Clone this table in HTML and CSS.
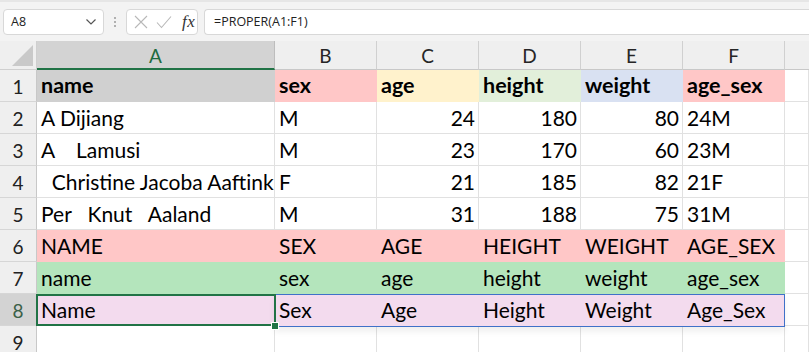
FILE: index.html
```html
<!DOCTYPE html>
<html>
<head>
<meta charset="utf-8">
<link rel="stylesheet" href="styles.css">
</head>
<body>
<div class="toolbar">
  <div class="namebox">
    <span class="ref">A8</span>
    <svg class="chev" width="12" height="8" viewBox="0 0 12 8"><path d="M1.5 1.5 L6 6 L10.5 1.5" fill="none" stroke="#555" stroke-width="1.2"/></svg>
  </div>
  <div class="dots"><i></i><i></i><i></i></div>
  <div class="fxbox">
    <svg width="14" height="14" viewBox="0 0 14 14"><path d="M1 1 L13 13 M13 1 L1 13" stroke="#b8b8b8" stroke-width="1.1" fill="none"/></svg>
    <svg width="16" height="14" viewBox="0 0 16 14"><path d="M1 7.5 L5.5 12.5 L15 1.5" stroke="#b8b8b8" stroke-width="1.1" fill="none"/></svg>
    <span class="fx">fx</span>
  </div>
  <div class="formula">=PROPER(A1:F1)</div>
</div>

<div class="sheet">
  <div class="corner"><span class="tri"></span></div>
  <div class="ch sel">A</div>
  <div class="ch">B</div>
  <div class="ch">C</div>
  <div class="ch">D</div>
  <div class="ch">E</div>
  <div class="ch">F</div>
  <div class="ch last"></div>

  <div class="rh">1</div>
  <div class="c b gray">name</div>
  <div class="c b pink">sex</div>
  <div class="c b yellow">age</div>
  <div class="c b lgreen">height</div>
  <div class="c b blue">weight</div>
  <div class="c b pink">age_sex</div>
  <div class="c"></div>

  <div class="rh">2</div>
  <div class="c">A Dijiang</div>
  <div class="c">M</div>
  <div class="c n">24</div>
  <div class="c n">180</div>
  <div class="c n">80</div>
  <div class="c">24M</div>
  <div class="c"></div>

  <div class="rh">3</div>
  <div class="c">A    Lamusi</div>
  <div class="c">M</div>
  <div class="c n">23</div>
  <div class="c n">170</div>
  <div class="c n">60</div>
  <div class="c">23M</div>
  <div class="c"></div>

  <div class="rh">4</div>
  <div class="c">  Christine Jacoba Aaftink</div>
  <div class="c">F</div>
  <div class="c n">21</div>
  <div class="c n">185</div>
  <div class="c n">82</div>
  <div class="c">21F</div>
  <div class="c"></div>

  <div class="rh">5</div>
  <div class="c">Per   Knut   Aaland</div>
  <div class="c">M</div>
  <div class="c n">31</div>
  <div class="c n">188</div>
  <div class="c n">75</div>
  <div class="c">31M</div>
  <div class="c"></div>

  <div class="rh">6</div>
  <div class="c pink">NAME</div>
  <div class="c pink">SEX</div>
  <div class="c pink">AGE</div>
  <div class="c pink">HEIGHT</div>
  <div class="c pink">WEIGHT</div>
  <div class="c pink">AGE_SEX</div>
  <div class="c"></div>

  <div class="rh">7</div>
  <div class="c green">name</div>
  <div class="c green">sex</div>
  <div class="c green">age</div>
  <div class="c green">height</div>
  <div class="c green">weight</div>
  <div class="c green">age_sex</div>
  <div class="c"></div>

  <div class="rh selrow">8</div>
  <div class="c lav active">Name<span class="handle"></span></div>
  <div class="c lav ranged">Sex<span class="range"></span></div>
  <div class="c lav">Age</div>
  <div class="c lav">Height</div>
  <div class="c lav">Weight</div>
  <div class="c lav">Age_Sex</div>
  <div class="c"></div>

  <div class="rh">9</div>
  <div class="c"></div>
  <div class="c"></div>
  <div class="c"></div>
  <div class="c"></div>
  <div class="c"></div>
  <div class="c"></div>
  <div class="c"></div>
</div>
</body>
</html>
```

FILE: styles.css
```css
* { box-sizing: border-box; }
html, body { margin: 0; padding: 0; background: #fff; overflow: hidden; }
body { width: 809px; height: 352px; font-family: "Lato", "Liberation Sans", sans-serif; }

.toolbar {
  height: 41px;
  background: #f3f3f3;
  border-top: 2px solid #e6e6e6;
  display: flex;
  align-items: center;
  padding: 0 0 0 3px;
  font-family: "Open Sans", "Liberation Sans", sans-serif;
  font-size: 12.5px;
  color: #222;
}
.namebox {
  width: 101px;
  height: 26px;
  background: #fff;
  border: 1px solid #d8d8d8;
  border-radius: 4px;
  display: flex;
  align-items: center;
  justify-content: space-between;
  padding: 0 6px 0 7px;
}
.chev { margin-top: 1px; }
.dots {
  width: 22px;
  display: flex;
  flex-direction: column;
  align-items: center;
  gap: 2px;
}
.dots i { display: block; width: 2px; height: 2px; background: #9a9a9a; border-radius: 1px; }
.fxbox {
  width: 72px;
  height: 26px;
  background: #fff;
  border: 1px solid #d8d8d8;
  border-radius: 4px;
  display: flex;
  align-items: center;
  gap: 8px;
  padding: 0 0 0 7px;
}
.fx {
  font-family: "Liberation Serif", "DejaVu Serif", serif;
  font-style: italic;
  font-size: 17px;
  color: #333;
  margin-left: 2px;
  letter-spacing: 0.5px;
}
.formula {
  flex: 1;
  margin-left: 6px;
  height: 26px;
  background: #fff;
  border: 1px solid #d8d8d8;
  border-right: none;
  border-radius: 4px 0 0 4px;
  display: flex;
  align-items: center;
  padding-left: 9px;
}

.sheet {
  display: grid;
  grid-template-columns: 37px 238px 102px 102px 102px 102px 102px 1fr;
  grid-template-rows: 29px repeat(8, 32px) 32px;
  font-size: 21px;
  color: #000;
}
.corner {
  background: #efefef;
  border-right: 1px solid #cfcfcf;
  border-bottom: 1px solid #cfcfcf;
  position: relative;
}
.tri {
  position: absolute;
  right: 3px;
  bottom: 3px;
  width: 0;
  height: 0;
  border-left: 21px solid transparent;
  border-bottom: 21px solid #c9c9c9;
}
.ch {
  background: #efefef;
  border-right: 1px solid #d0d0d0;
  border-bottom: 1px solid #c8c8c8;
  display: flex;
  align-items: center;
  justify-content: center;
  color: #262626;
  font-size: 19px;
  padding-top: 1px;
}
.ch.sel {
  background: #d3d3d3;
  color: #1e6b3e;
  border-bottom: 2px solid #217346;
  border-right-color: #bdbdbd;
}
.ch.last { border-right: none; }
.rh {
  background: #efefef;
  border-right: 1px solid #c8c8c8;
  border-bottom: 1px solid #d6d6d6;
  display: flex;
  align-items: center;
  justify-content: center;
  color: #222;
  font-size: 19px;
  padding-top: 1px;
}
.rh.selrow { background: #d3d3d3; color: #3b6048; }

.c {
  border-right: 1px solid #e1e1e1;
  border-bottom: 1px solid #e1e1e1;
  white-space: pre;
  display: flex;
  align-items: flex-end;
  padding: 0 4px 5px 4px;
  line-height: 1;
}
.c.n { justify-content: flex-end; padding-right: 3px; }
.c.b { font-weight: 700; font-size: 21.5px; }

.gray   { background: #d0d0d0; border-color: transparent; }
.pink   { background: #ffc7c7; border-color: transparent; }
.yellow { background: #fff2cc; border-color: transparent; }
.lgreen { background: #e2efda; border-color: transparent; }
.blue   { background: #d9e1f2; border-color: transparent; }
.green  { background: #b4e5bc; border-color: transparent; }
.lav    { background: #f3dbee; border-color: transparent; }

.ranged { position: relative; }
.range {
  position: absolute;
  left: -1px;
  top: 0;
  width: 511px;
  height: 33px;
  border: 1px solid #3f71c8;
  box-shadow: 0 5px 6px rgba(0, 0, 0, 0.06);
  z-index: 2;
  pointer-events: none;
}
.active { position: relative; }
.active::after {
  content: "";
  position: absolute;
  left: -1px;
  top: 0;
  right: -2px;
  bottom: -1px;
  border: 2px solid #217346;
  z-index: 3;
}
.handle {
  position: absolute;
  right: -5px;
  bottom: -5px;
  width: 6px;
  height: 6px;
  background: #217346;
  border: 1px solid #fff;
  box-sizing: content-box;
  z-index: 4;
}
```
